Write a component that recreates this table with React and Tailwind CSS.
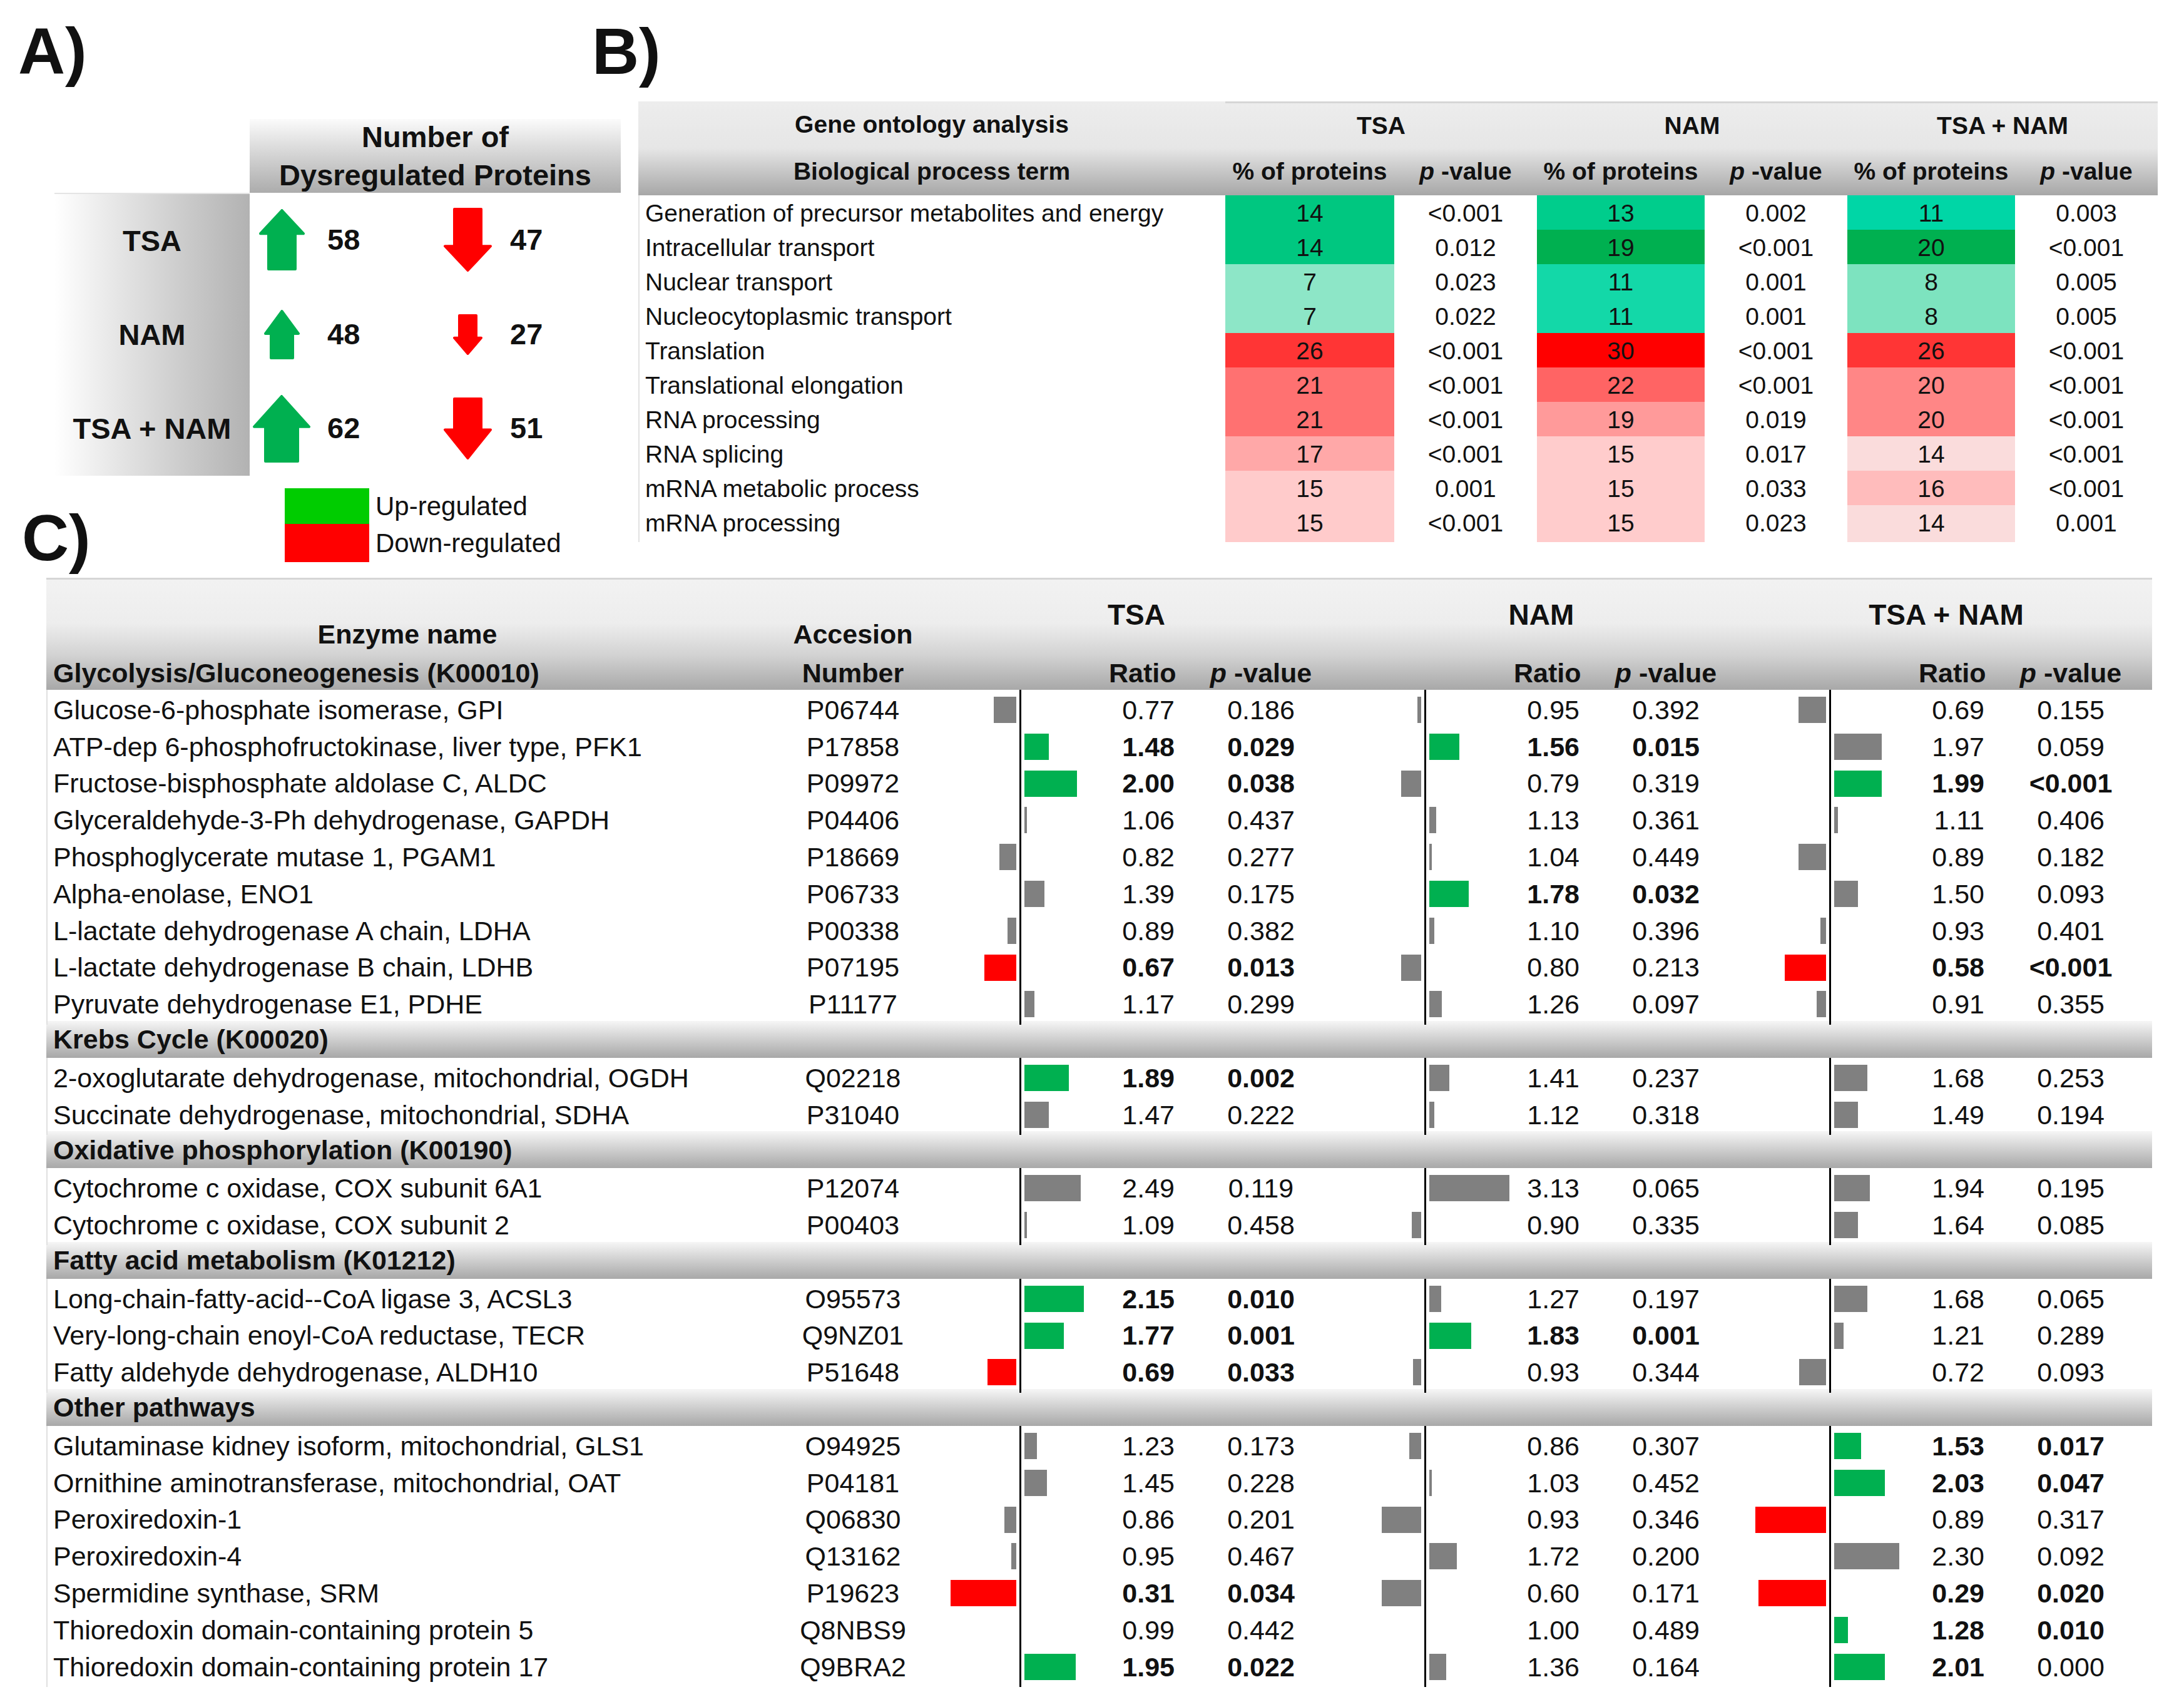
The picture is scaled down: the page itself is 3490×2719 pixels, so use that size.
import React from "react";

// heat map cells for panel B: [value, bg class]
const goRows = [
  ["Generation of precursor metabolites and energy", ["14", "bg-[#00c780]"], "<0.001", ["13", "bg-[#00cd8c]"], "0.002", ["11", "bg-[#00d6a6]"], "0.003"],
  ["Intracellular transport", ["14", "bg-[#00c780]"], "0.012", ["19", "bg-[#00b050]"], "<0.001", ["20", "bg-[#00b050]"], "<0.001"],
  ["Nuclear transport", ["7", "bg-[#8de6c7]"], "0.023", ["11", "bg-[#13d8a8]"], "0.001", ["8", "bg-[#7de3bf]"], "0.005"],
  ["Nucleocytoplasmic transport", ["7", "bg-[#8de6c7]"], "0.022", ["11", "bg-[#13d8a8]"], "0.001", ["8", "bg-[#7de3bf]"], "0.005"],
  ["Translation", ["26", "bg-[#ff3535]"], "<0.001", ["30", "bg-[#ff0000]"], "<0.001", ["26", "bg-[#ff3535]"], "<0.001"],
  ["Translational elongation", ["21", "bg-[#ff7171]"], "<0.001", ["22", "bg-[#ff6464]"], "<0.001", ["20", "bg-[#ff8686]"], "<0.001"],
  ["RNA processing", ["21", "bg-[#ff7171]"], "<0.001", ["19", "bg-[#ff9a9a]"], "0.019", ["20", "bg-[#ff8686]"], "<0.001"],
  ["RNA splicing", ["17", "bg-[#ffa8a8]"], "<0.001", ["15", "bg-[#ffcccc]"], "0.017", ["14", "bg-[#fadcdc]"], "<0.001"],
  ["mRNA metabolic process", ["15", "bg-[#ffcbcb]"], "0.001", ["15", "bg-[#ffcccc]"], "0.033", ["16", "bg-[#ffbcbc]"], "<0.001"],
  ["mRNA processing", ["15", "bg-[#ffcbcb]"], "<0.001", ["15", "bg-[#ffcccc]"], "0.023", ["14", "bg-[#fadcdc]"], "0.001"],
];

// panel C: [bar width (neg = left), colour, ratio, p, bold (1 both, 2 ratio only)]
const sections = [
  {
    title: null,
    rows: [
      ["Glucose-6-phosphate isomerase, GPI", "P06744", [-36, "k", "0.77", "0.186"], [-6, "k", "0.95", "0.392"], [-44, "k", "0.69", "0.155"]],
      ["ATP-dep 6-phosphofructokinase, liver type, PFK1", "P17858", [39, "g", "1.48", "0.029", 1], [48, "g", "1.56", "0.015", 1], [76, "k", "1.97", "0.059"]],
      ["Fructose-bisphosphate aldolase C, ALDC", "P09972", [84, "g", "2.00", "0.038", 1], [-32, "k", "0.79", "0.319"], [76, "g", "1.99", "<0.001", 1]],
      ["Glyceraldehyde-3-Ph dehydrogenase, GAPDH", "P04406", [4, "k", "1.06", "0.437"], [11, "k", "1.13", "0.361"], [6, "k", "1.11", "0.406"]],
      ["Phosphoglycerate mutase 1, PGAM1", "P18669", [-27, "k", "0.82", "0.277"], [4, "k", "1.04", "0.449"], [-44, "k", "0.89", "0.182"]],
      ["Alpha-enolase, ENO1", "P06733", [32, "k", "1.39", "0.175"], [63, "g", "1.78", "0.032", 1], [38, "k", "1.50", "0.093"]],
      ["L-lactate dehydrogenase A chain, LDHA", "P00338", [-14, "k", "0.89", "0.382"], [8, "k", "1.10", "0.396"], [-9, "k", "0.93", "0.401"]],
      ["L-lactate dehydrogenase B chain, LDHB", "P07195", [-51, "r", "0.67", "0.013", 1], [-32, "k", "0.80", "0.213"], [-66, "r", "0.58", "<0.001", 1]],
      ["Pyruvate dehydrogenase E1, PDHE", "P11177", [16, "k", "1.17", "0.299"], [20, "k", "1.26", "0.097"], [-15, "k", "0.91", "0.355"]],
    ],
  },
  {
    title: "Krebs Cycle (K00020)",
    rows: [
      ["2-oxoglutarate dehydrogenase, mitochondrial, OGDH", "Q02218", [71, "g", "1.89", "0.002", 1], [32, "k", "1.41", "0.237"], [53, "k", "1.68", "0.253"]],
      ["Succinate dehydrogenase, mitochondrial, SDHA", "P31040", [39, "k", "1.47", "0.222"], [8, "k", "1.12", "0.318"], [38, "k", "1.49", "0.194"]],
    ],
  },
  {
    title: "Oxidative phosphorylation (K00190)",
    rows: [
      ["Cytochrome c oxidase, COX subunit 6A1", "P12074", [90, "k", "2.49", "0.119"], [128, "k", "3.13", "0.065"], [57, "k", "1.94", "0.195"]],
      ["Cytochrome c oxidase, COX subunit 2", "P00403", [4, "k", "1.09", "0.458"], [-15, "k", "0.90", "0.335"], [38, "k", "1.64", "0.085"]],
    ],
  },
  {
    title: "Fatty acid metabolism (K01212)",
    rows: [
      ["Long-chain-fatty-acid--CoA ligase 3, ACSL3", "O95573", [95, "g", "2.15", "0.010", 1], [19, "k", "1.27", "0.197"], [53, "k", "1.68", "0.065"]],
      ["Very-long-chain enoyl-CoA reductase, TECR", "Q9NZ01", [63, "g", "1.77", "0.001", 1], [67, "g", "1.83", "0.001", 1], [15, "k", "1.21", "0.289"]],
      ["Fatty aldehyde dehydrogenase, ALDH10", "P51648", [-46, "r", "0.69", "0.033", 1], [-13, "k", "0.93", "0.344"], [-43, "k", "0.72", "0.093"]],
    ],
  },
  {
    title: "Other pathways",
    rows: [
      ["Glutaminase kidney isoform, mitochondrial, GLS1", "O94925", [20, "k", "1.23", "0.173"], [-19, "k", "0.86", "0.307"], [43, "g", "1.53", "0.017", 1]],
      ["Ornithine aminotransferase, mitochondrial, OAT", "P04181", [36, "k", "1.45", "0.228"], [4, "k", "1.03", "0.452"], [81, "g", "2.03", "0.047", 1]],
      ["Peroxiredoxin-1", "Q06830", [-19, "k", "0.86", "0.201"], [-63, "k", "0.93", "0.346"], [-113, "r", "0.89", "0.317"]],
      ["Peroxiredoxin-4", "Q13162", [-8, "k", "0.95", "0.467"], [44, "k", "1.72", "0.200"], [104, "k", "2.30", "0.092"]],
      ["Spermidine synthase, SRM", "P19623", [-105, "r", "0.31", "0.034", 1], [-63, "k", "0.60", "0.171"], [-108, "r", "0.29", "0.020", 1]],
      ["Thioredoxin domain-containing protein 5", "Q8NBS9", [0, "k", "0.99", "0.442"], [0, "k", "1.00", "0.489"], [22, "g", "1.28", "0.010", 1]],
      ["Thioredoxin domain-containing protein 17", "Q9BRA2", [82, "g", "1.95", "0.022", 1], [27, "k", "1.36", "0.164"], [81, "g", "2.01", "0.000", 2]],
    ],
  },
];

const countRows = [
  { label: "TSA", up: [73, 98, 43, 0.4], upN: "58", down: [77, 102, 43, 0.4], downN: "47" },
  { label: "NAM", up: [57, 79, 35, 0.48], upN: "48", down: [47, 65, 27, 0.42], downN: "27" },
  { label: "TSA + NAM", up: [92, 108, 52, 0.47], upN: "62", down: [77, 99, 43, 0.48], downN: "51" },
];

const Arrow = ({ dims, down }) => {
  const [w, h, s, r] = dims;
  const hh = h * r;
  const pts = [
    [w / 2, 2],
    [w - 2, hh],
    [(w + s) / 2, hh],
    [(w + s) / 2, h - 2],
    [(w - s) / 2, h - 2],
    [(w - s) / 2, hh],
    [2, hh],
  ]
    .map((p) => p.join(","))
    .join(" ");
  const color = down ? "#ff0000" : "#00b050";
  return (
    <svg width={w} height={h} viewBox={`0 0 ${w} ${h}`} className={down ? "rotate-180" : ""}>
      <polygon points={pts} fill={color} stroke={color} strokeWidth="4" strokeLinejoin="round" />
    </svg>
  );
};

const PValue = () => (
  <span>
    <span className="italic">p</span> -value
  </span>
);

const barColor = (c) => (c === "g" ? "bg-[#00b050]" : c === "r" ? "bg-[#ff0000]" : "bg-[#808080]");

const Block = ({ d }) => {
  const [bar, c, ratio, p, b] = d;
  return (
    <div className="flex h-full items-center">
      <div className="flex w-[153px] justify-end pr-[5px]">
        {bar < 0 && <div className={`h-[42px] ${barColor(c)}`} style={{ width: -bar }} />}
      </div>
      <div className="w-[3px] self-stretch bg-black" />
      <div className="flex w-[140px] pl-[5px]">
        {bar > 0 && <div className={`h-[42px] ${barColor(c)}`} style={{ width: bar }} />}
      </div>
      <div className={`w-[105px] text-right ${b ? "font-bold" : ""}`}>{ratio}</div>
      <div className={`ml-[40px] w-[196px] text-center ${b === 1 ? "font-bold" : ""}`}>{p}</div>
    </div>
  );
};

const cGrid = "grid grid-cols-[1176px_226px_647px_647px_647px_22px]";
const bGrid = "grid grid-cols-[938px_270px_228px_268px_228px_268px_228px]";

export default function App() {
  return (
    <div className="relative h-[2719px] w-[3490px] overflow-hidden bg-white font-['Liberation_Sans',Arial,sans-serif] text-[#111]">
      <div className="flex h-[923px]">
        {/* A) */}
        <div className="flex w-[946px] shrink-0 flex-col">
          <div className="ml-[29px] mt-[29px] h-[104px] text-[104px] font-bold leading-none">A)</div>
          <div className="ml-[87px] mt-[57px] grid w-[905px] grid-cols-[312px_593px] grid-rows-[118px_452px]">
            <div />
            <div className="flex flex-col items-center justify-center bg-linear-to-b from-[#fbfbfb] to-[#acacac] text-[47px] font-bold leading-[61px]">
              <span>Number of</span>
              <span>Dysregulated Proteins</span>
            </div>
            <div className="flex flex-col border-t-2 border-[#e4e4e4] bg-linear-to-r from-white to-[#b2b2b2]">
              {countRows.map((r) => (
                <div key={r.label} className="flex flex-1 items-center justify-center text-[47px] font-bold">
                  {r.label}
                </div>
              ))}
            </div>
            <div className="flex flex-col">
              {countRows.map((r) => (
                <div key={r.label} className="flex flex-1 items-center text-[47px] font-bold">
                  <div className="flex w-[102px] justify-center">
                    <Arrow dims={r.up} />
                  </div>
                  <div className="ml-[22px] w-[174px]">{r.upN}</div>
                  <div className="flex w-[100px] justify-center">
                    <Arrow dims={r.down} down />
                  </div>
                  <div className="ml-[18px]">{r.downN}</div>
                </div>
              ))}
            </div>
          </div>
          <div className="mt-[20px] flex">
            <div className="mt-[27px] w-[455px] pl-[35px] text-[104px] font-bold leading-none">C)</div>
            <div className="flex flex-col text-[42px]">
              <div className="flex h-[57px] items-center">
                <div className="h-full w-[135px] bg-[#00cc00]" />
                <span className="ml-[10px]">Up-regulated</span>
              </div>
              <div className="flex h-[61px] items-center">
                <div className="h-full w-[135px] bg-[#ff0000]" />
                <span className="ml-[10px]">Down-regulated</span>
              </div>
            </div>
          </div>
        </div>

        {/* B) */}
        <div className="flex flex-col pt-[30px]">
          <div className="h-[104px] text-[104px] font-bold leading-none">B)</div>
          <div className="ml-[74px] mt-[28px] w-[2428px] text-[39px]">
            <div className={`${bGrid} grid-rows-[75px_75px] bg-linear-to-b from-[#ededed] via-[#e6e6e6] to-[#a7a7a7] font-bold`}>
              <div className="flex items-center justify-center">Gene ontology analysis</div>
              <div className="col-span-2 flex items-center justify-center border-t-[3px] border-[#d6d6d6]">TSA</div>
              <div className="col-span-2 flex items-center justify-center border-t-[3px] border-[#d6d6d6]">NAM</div>
              <div className="col-span-2 flex items-center justify-center border-t-[3px] border-[#d6d6d6]">TSA + NAM</div>
              <div className="flex items-center justify-center">Biological process term</div>
              <div className="flex items-center justify-center">% of proteins</div>
              <div className="flex items-center justify-center"><PValue /></div>
              <div className="flex items-center justify-center">% of proteins</div>
              <div className="flex items-center justify-center"><PValue /></div>
              <div className="flex items-center justify-center">% of proteins</div>
              <div className="flex items-center justify-center"><PValue /></div>
            </div>
            {goRows.map((r) => (
              <div key={r[0]} className={`${bGrid} h-[55px]`}>
                <div className="flex items-center border-l-2 border-[#e2e2e2] pl-[9px]">{r[0]}</div>
                <div className={`flex items-center justify-center ${r[1][1]}`}>{r[1][0]}</div>
                <div className="flex items-center justify-center">{r[2]}</div>
                <div className={`flex items-center justify-center ${r[3][1]}`}>{r[3][0]}</div>
                <div className="flex items-center justify-center">{r[4]}</div>
                <div className={`flex items-center justify-center ${r[5][1]}`}>{r[5][0]}</div>
                <div className="flex items-center justify-center">{r[6]}</div>
              </div>
            ))}
          </div>
        </div>
      </div>

      {/* C) */}
      <div className="ml-[74px] w-[3365px] text-[43px]">
        <div className="border-t-[3px] border-[#d6d6d6] bg-[linear-gradient(180deg,#f2f2f2_0%,#ededed_40%,#d3d3d3_68%,#a8a8a8_100%)] font-bold">
          <div className={`${cGrid} h-[117px]`}>
            <div className="flex h-[59px] items-center justify-center self-end pr-[22px]">Enzyme name</div>
            <div className="flex h-[59px] items-center justify-center self-end">Accesion</div>
            {["TSA", "NAM", "TSA + NAM"].map((t) => (
              <div key={t} className="pl-[33px] pt-[27px]">
                <div className="flex h-[59px] items-center justify-center text-[46px]">{t}</div>
              </div>
            ))}
            <div />
          </div>
          <div className={`${cGrid} h-[58.8px]`}>
            <div className="flex items-center pl-[11px]">Glycolysis/Gluconeogenesis (K00010)</div>
            <div className="flex items-center justify-center">Number</div>
            {[0, 1, 2].map((i) => (
              <div key={i} className="flex items-center">
                <div className="w-[296px]" />
                <div className="w-[105px] text-right">Ratio</div>
                <div className="ml-[40px] w-[196px] text-center"><PValue /></div>
              </div>
            ))}
            <div />
          </div>
        </div>
        {sections.map((s, si) => (
          <div key={si}>
            {s.title && (
              <div className="flex h-[58.8px] items-center bg-linear-to-b from-[#f6f6f6] to-[#a8a8a8] pl-[11px] font-bold">
                {s.title}
              </div>
            )}
            {s.rows.map((r) => (
              <div key={r[0]} className={`${cGrid} h-[58.8px]`}>
                <div className="flex items-center border-l-2 border-[#e0e0e0] pl-[9px]">{r[0]}</div>
                <div className="flex items-center justify-center">{r[1]}</div>
                <Block d={r[2]} />
                <Block d={r[3]} />
                <Block d={r[4]} />
                <div />
              </div>
            ))}
          </div>
        ))}
      </div>
    </div>
  );
}
